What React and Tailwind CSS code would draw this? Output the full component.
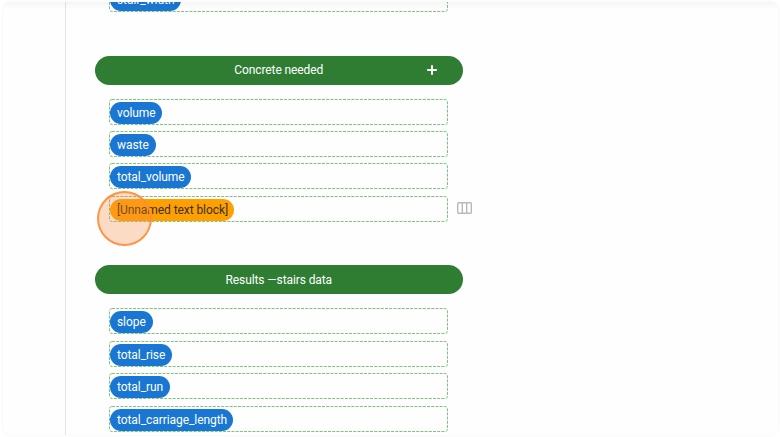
import React from "react";

function Field({ name, color = "bg-[#1976d2] text-white", width }) {
  return (
    <div className="relative h-[25.5px] w-[339px] shrink-0 pl-[0.5px] pt-[3px]">
      <svg className="absolute left-0 top-0 h-[26px] w-[339px] overflow-visible" fill="none">
        <rect x="0.5" y="0.5" width="338" height="25" rx="2.5" stroke="#7cc581" strokeDasharray="3 1.2" />
      </svg>
      <div
        className={`relative flex h-[22px] items-center whitespace-nowrap rounded-full pl-[7.5px] text-[12px] leading-[22px] tracking-[-0.07px] ${width} ${color}`}
      >
        {name}
      </div>
    </div>
  );
}

function Header({ title, children }) {
  return (
    <div className="relative flex h-[28.5px] w-[368.5px] shrink-0 items-center justify-center rounded-full bg-[#2e7d32] text-[12px] tracking-[-0.1px] text-white">
      <span className="whitespace-nowrap">{title}</span>
      {children}
    </div>
  );
}

export default function App() {
  return (
    <div className="h-[437px] w-[780px] overflow-hidden bg-white pl-[3px] pt-[2px] font-['Roboto',sans-serif]">
      <div className="relative flex h-[433px] w-[775px] overflow-hidden rounded-[8px] bg-[#fefefe] shadow-[0_0_3px_rgba(0,0,0,0.06)]">
        <aside className="w-[63px] shrink-0 border-r border-[#e4e4e4]" />
        <main className="flex flex-col pl-[28.5px]">
          <div className="-mt-[16px] ml-[14.5px]">
            <Field name="stair_width" width="w-[71.5px]" />
          </div>
          <div className="mt-[44.5px]">
            <Header title="Concrete needed">
              <svg className="absolute left-[332px] top-[8.5px] h-[10px] w-[10px]" viewBox="0 0 10 10" stroke="#fff" strokeWidth="2">
                <path d="M5 0.2V9.8M0.2 5H9.8" />
              </svg>
            </Header>
          </div>
          <div className="ml-[14.5px] mt-[14.3px] flex flex-col gap-[6.83px]">
            <Field name="volume" width="w-[52px]" />
            <Field name="waste" width="w-[46px]" />
            <Field name="total_volume" width="w-[81px]" />
            <div className="flex items-center gap-[8.5px]">
              <Field name="[Unnamed text block]" width="w-[124px]" color="bg-[#ffa000] text-[#3b2f20]" />
              <svg className="-mt-px h-[12px] w-[15px]" viewBox="0 0 15 12" fill="none" stroke="#b9b9b9">
                <rect x="0.7" y="0.7" width="13.6" height="10.6" rx="1" strokeWidth="1.4" />
                <path d="M5.3 1V11M9.7 1V11" strokeWidth="1.4" />
              </svg>
            </div>
          </div>
          <div className="mt-[44px]">
            <Header title="Results —stairs data" />
          </div>
          <div className="ml-[14.5px] mt-[14.6px] flex flex-col gap-[6.9px]">
            <Field name="slope" width="w-[43px]" />
            <Field name="total_rise" width="w-[62px]" />
            <Field name="total_run" width="w-[60px]" />
            <Field name="total_carriage_length" width="w-[123px]" />
          </div>
        </main>
        <div className="absolute left-[94px] top-[189px] h-[55px] w-[55px] rounded-full border-2 border-[#ff8c3a]/90 bg-[#f98b40]/30" />
        <div className="pointer-events-none absolute inset-x-0 top-0 h-[7px] bg-gradient-to-b from-black/[0.035] to-transparent" />
      </div>
    </div>
  );
}
